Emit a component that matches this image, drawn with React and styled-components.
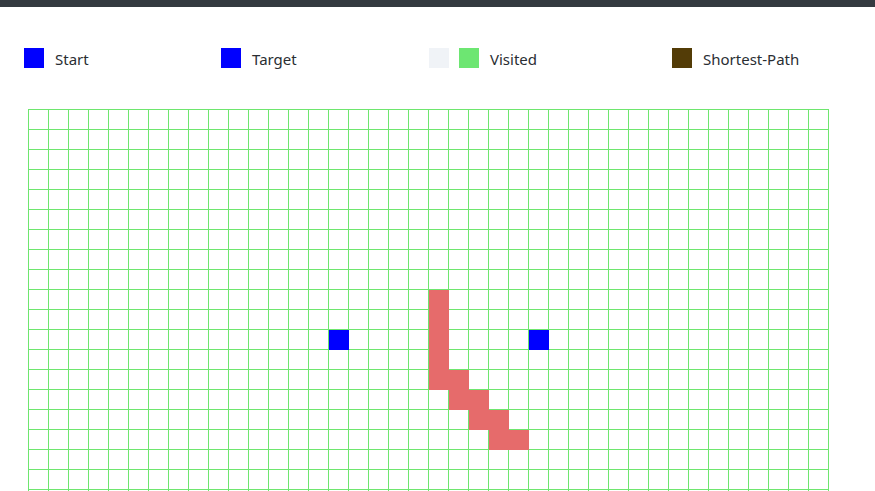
import React from 'react';
import styled, { createGlobalStyle } from 'styled-components';

const ROWS = 20;
const COLS = 40;

const START = [11, 15];
const TARGET = [11, 25];
const WALLS = [
  [9, 20], [10, 20], [11, 20], [12, 20], [13, 20],
  [13, 21], [14, 21],
  [14, 22], [15, 22],
  [15, 23], [16, 23],
  [16, 24],
];

const GlobalStyle = createGlobalStyle`
  html, body {
    margin: 0;
    overflow: hidden;
    background: #fff;
    font-family: "Segoe UI", "Noto Sans", "Liberation Sans", sans-serif;
    color: #212529;
  }
`;

const TopBar = styled.div`
  height: 7px;
  background: #343a40;
`;

const Legend = styled.div`
  display: grid;
  grid-template-columns: 197px 208px 243px auto;
  align-items: center;
  padding: 38px 0 0 24px;
  height: 24px;
`;

const LegendItem = styled.div`
  display: flex;
  align-items: center;
  gap: 10px;
  font-size: 15px;
  line-height: 24px;
`;

const Swatch = styled.span`
  display: inline-block;
  width: 20px;
  height: 20px;
  background: ${(p) => p.color};
`;

const Label = styled.span`
  margin: 2px 0 0 1px;
  color: #2a2e33;
`;

const Board = styled.div`
  display: grid;
  grid-template-columns: repeat(${COLS}, 20px);
  grid-auto-rows: 20px;
  width: max-content;
  margin: 40px 0 0 28px;
  border-top: 1px solid #6ee66e;
  border-left: 1px solid #6ee66e;
`;

const Cell = styled.div`
  box-sizing: border-box;
  width: 20px;
  height: 20px;
  border-right: 1px solid ${(p) => p.fill || '#6ee66e'};
  border-bottom: 1px solid ${(p) => p.fill || '#6ee66e'};
  background: ${(p) => p.fill || '#fff'};
`;

const kindOf = (r, c) => {
  if (r === START[0] && c === START[1]) return '#0000ff';
  if (r === TARGET[0] && c === TARGET[1]) return '#0000ff';
  if (WALLS.some(([wr, wc]) => wr === r && wc === c)) return '#e66b6b';
  return null;
};

export default function App() {
  const cells = [];
  for (let r = 0; r < ROWS; r++) {
    for (let c = 0; c < COLS; c++) {
      cells.push(<Cell key={`${r}-${c}`} fill={kindOf(r, c)} />);
    }
  }

  return (
    <>
      <GlobalStyle />
      <TopBar />
      <Legend>
        <LegendItem>
          <Swatch color="#0000ff" />
          <Label>Start</Label>
        </LegendItem>
        <LegendItem>
          <Swatch color="#0000ff" />
          <Label>Target</Label>
        </LegendItem>
        <LegendItem>
          <Swatch color="#f0f3f7" />
          <Swatch color="#6de672" />
          <Label>Visited</Label>
        </LegendItem>
        <LegendItem>
          <Swatch color="#533c07" />
          <Label>Shortest-Path</Label>
        </LegendItem>
      </Legend>
      <Board>{cells}</Board>
    </>
  );
}
